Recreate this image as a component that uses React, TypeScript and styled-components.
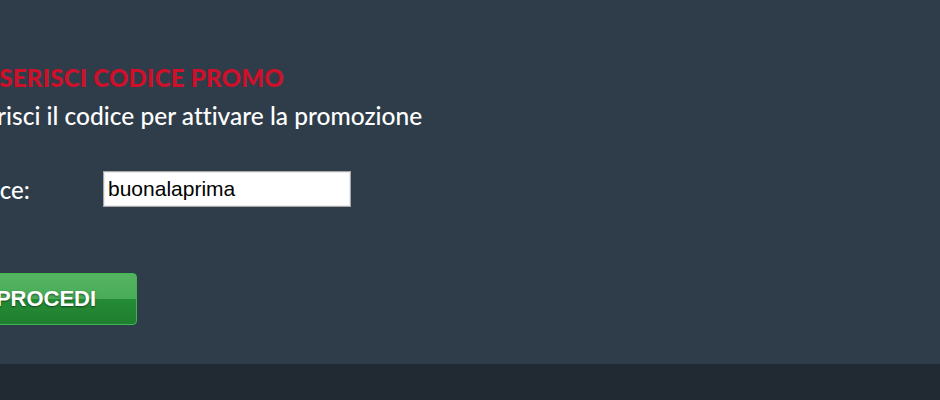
import styled, { createGlobalStyle } from 'styled-components'

const GlobalStyle = createGlobalStyle`
  html, body {
    margin: 0;
    padding: 0;
    background: #212a33;
    overflow: hidden;
  }
`;

const Page = styled.div`
  width: 940px;
  height: 400px;
  display: flex;
  flex-direction: column;
  background: #212a33;
`;

const Panel = styled.section`
  height: 364px;
  background: #2e3d49;
  box-sizing: border-box;
  padding-top: 63px;
  overflow: hidden;
`;

// the form is wider than the window, its left part falls outside
const Content = styled.div`
  margin-left: -27px;
`;

const Title = styled.h2`
  margin: 0;
  font-family: Lato, "Liberation Sans", sans-serif;
  font-weight: 900;
  font-size: 24px;
  line-height: 30px;
  letter-spacing: 0.25px;
  color: #d0102a;
  text-transform: uppercase;
`;

const Subtitle = styled.p`
  margin: 8px 0 0 -20px;
  font-family: Lato, "Liberation Sans", sans-serif;
  font-weight: 500;
  font-size: 24.5px;
  line-height: 30px;
  font-variant-ligatures: none;
  color: #ffffff;
`;

const FieldRow = styled.div`
  display: flex;
  align-items: center;
  height: 36px;
  margin-top: 40px;
  margin-left: -22px;
`;

const Label = styled.label`
  width: 152px;
  font-family: Lato, "Liberation Sans", sans-serif;
  font-weight: 500;
  font-size: 24px;
  color: #ffffff;
`;

const Input = styled.input`
  width: 248px;
  height: 36px;
  box-sizing: border-box;
  border: 1px solid #a9a9a9;
  box-shadow: inset 0 0 0 1px #ececec;
  background: #ffffff;
  padding: 0 4px;
  font-family: "Liberation Sans", Arial, sans-serif;
  font-size: 21px;
  color: #000000;
  outline: none;
  caret-color: #000;
`;

const Button = styled.button`
  display: block;
  margin: 66px 0 0 -18px;
  width: 182px;
  height: 52px;
  box-sizing: border-box;
  border: 1px solid #3fb64f;
  border-radius: 4px;
  background: linear-gradient(to bottom, #54b461 0%, #49aa57 50%, #248b35 50%, #1f7f30 100%);
  color: #ffffff;
  font-family: "Liberation Sans", Arial, sans-serif;
  font-weight: 700;
  font-size: 22px;
  text-shadow: 0 1px 2px rgba(0, 0, 0, 0.5);
  text-transform: uppercase;
  cursor: pointer;
`;

const Footer = styled.footer`
  flex: 1;
  background: #212a33;
`;

export default function App() {
  return (
    <>
      <GlobalStyle />
      <Page>
        <Panel>
          <Content>
            <Title>Inserisci codice promo</Title>
            <Subtitle>Inserisci il codice per attivare la promozione</Subtitle>
            <FieldRow>
              <Label htmlFor="codice">Codice:</Label>
              <Input id="codice" defaultValue="buonalaprima" autoFocus />
            </FieldRow>
            <Button type="button">Procedi</Button>
          </Content>
        </Panel>
        <Footer />
      </Page>
    </>
  )
}
